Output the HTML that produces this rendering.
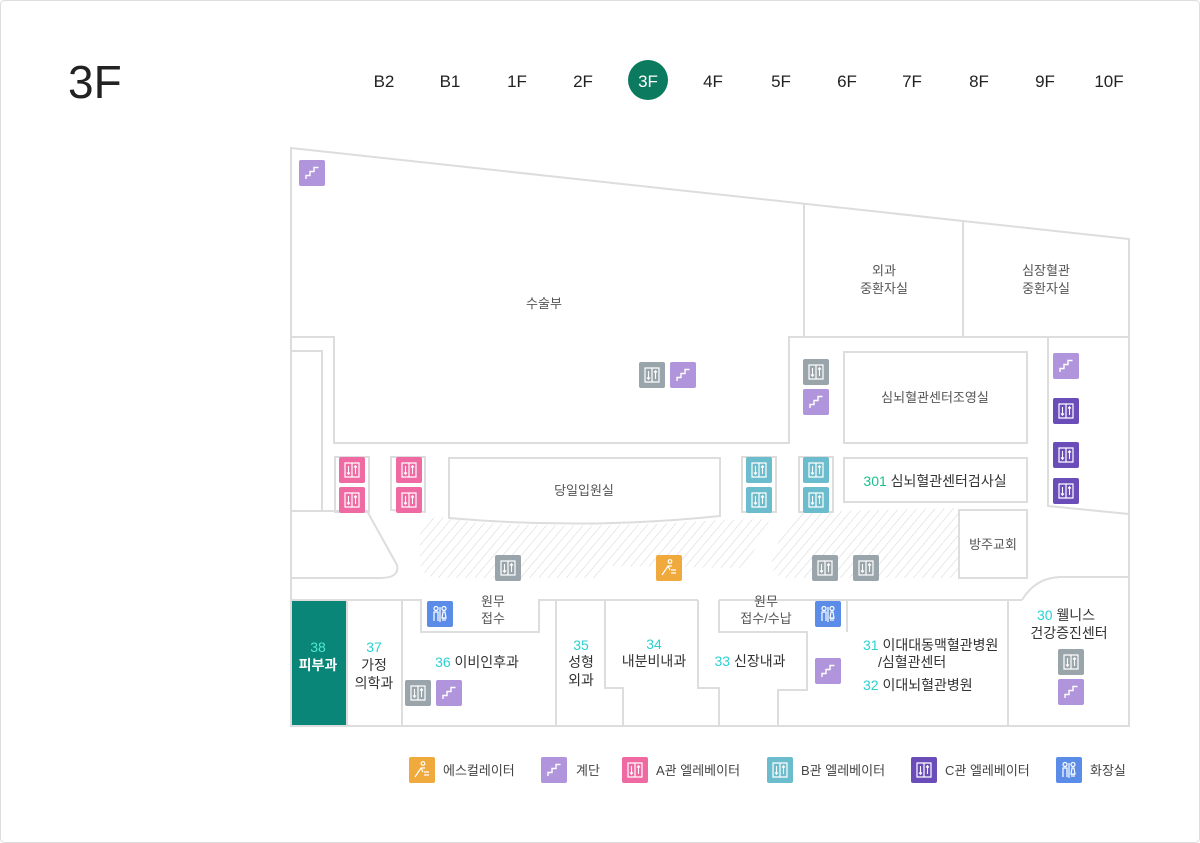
<!DOCTYPE html>
<html><head><meta charset="utf-8"><style>
html,body{margin:0;padding:0;background:#fff}
svg{display:block}
text{font-family:"Liberation Sans","Noto Sans CJK KR",sans-serif}
</style></head><body>
<svg width="1200" height="843" viewBox="0 0 1200 843" xmlns="http://www.w3.org/2000/svg">
<defs>
<pattern id="hatch" width="7" height="7" patternUnits="userSpaceOnUse" patternTransform="rotate(40)">
<line x1="0" y1="0" x2="0" y2="7" stroke="#d4d4d4" stroke-width="1"/>
</pattern>
<g id="elv"><path d="M6 6h14v14H6zM13 6v14" fill="none" stroke="#fff" stroke-width="1.2"/><path d="M9.5 9v8M8 15.5l1.5 1.8 1.5-1.8M16.5 17V9M15 10.5l1.5-1.8 1.5 1.8" fill="none" stroke="#fff" stroke-width="1.1"/></g>
<g id="stair"><path d="M7 19v-3.5h4v-4h4v-4h4.5" fill="none" stroke="#fff" stroke-width="1.4"/></g>
<g id="wc"><circle cx="9" cy="7.5" r="2" fill="none" stroke="#fff" stroke-width="1.2"/><path d="M7 20v-9h4v9M13 6v15" stroke="#fff" fill="none" stroke-width="1.2"/><circle cx="17" cy="7.5" r="2" fill="none" stroke="#fff" stroke-width="1.2"/><path d="M15 17l1-6h2l1 6zM16 17v3M18 17v3" stroke="#fff" fill="none" stroke-width="1.2"/></g>
<g id="esc"><circle cx="14" cy="6.5" r="1.8" fill="none" stroke="#fff" stroke-width="1.2"/><path d="M6 20l6-9h4M12 11l2 4M15 15h5M15 18h5" stroke="#fff" fill="none" stroke-width="1.2"/></g>
</defs>
<rect x="0.5" y="0.5" width="1199" height="842" rx="4" fill="#fff" stroke="#ddd"/>
<text x="68" y="98" font-size="46" fill="#222">3F</text>
<g font-size="17" fill="#222" text-anchor="middle">
<text x="384" y="87">B2</text><text x="450" y="87">B1</text><text x="517" y="87">1F</text><text x="583" y="87">2F</text>
<circle cx="648" cy="80" r="20" fill="#0b7a5e"/><text x="648" y="87" fill="#fff">3F</text>
<text x="713" y="87">4F</text><text x="781" y="87">5F</text><text x="847" y="87">6F</text><text x="912" y="87">7F</text><text x="979" y="87">8F</text><text x="1045" y="87">9F</text><text x="1109" y="87">10F</text>
</g>
<path d="M430 518 Q449 516 470 522 Q585 530 720 520 L770 519 L745 568 L610 566 L602 578 L440 578 Q420 578 420 560 L420 540 Q420 518 430 518Z" fill="url(#hatch)"/>
<path d="M800 512 L959 508 L959 578 L790 578 Q770 578 772 560 Q778 535 800 512Z" fill="url(#hatch)"/>
<rect x="291" y="600" width="56" height="126" fill="#0a8678"/>
<g fill="none" stroke="#ddd" stroke-width="2">
<path d="M291 148 L1129 239 L1129 726 L291 726 Z"/>
<path d="M804 204 V337 M963 222 V337 M789 337 H1129"/>
<path d="M291 337 H334 V443 H789 V337 H804"/>
<path d="M291 351 H322 V511"/>
<path d="M291 511 H367 L397 565 Q400 578 380 578 H291"/>
<path d="M335 457 H369 V512 H335Z M391 457 H425 V512 L391 510Z"/>
<path d="M449 458 H720 V516 Q585 530 449 518 Z"/>
<path d="M742 457 H776 V512 H742Z M799 457 H833 V512 H799Z"/>
<rect x="844" y="352" width="183" height="91"/>
<rect x="844" y="458" width="183" height="44"/>
<rect x="959" y="510" width="68" height="68"/>
<path d="M1048 337 V506 L1129 514"/>
<path d="M1022 600 Q1035 578 1060 577 H1129"/>
<path d="M291 600 H421 V632 H539 V600 H698 M719 600 H1022"/>
<path d="M698 600 V688 H719 V726 M719 600 V632 H807 V690 H778 V726 M847 600 V632"/>
<path d="M347 600 V726 M402 600 V726 M556 600 V726 M605 600 V688 H623 V726 M1008 600 V726"/>
</g>
<g>
<rect x="299" y="160" width="26" height="26" rx="2" fill="#b094dc"/><use href="#stair" x="299" y="160"/>
<rect x="639" y="362" width="26" height="26" rx="2" fill="#9aa5ab"/><use href="#elv" x="639" y="362"/>
<rect x="670" y="362" width="26" height="26" rx="2" fill="#b094dc"/><use href="#stair" x="670" y="362"/>
<rect x="803" y="359" width="26" height="26" rx="2" fill="#9aa5ab"/><use href="#elv" x="803" y="359"/>
<rect x="803" y="389" width="26" height="26" rx="2" fill="#b094dc"/><use href="#stair" x="803" y="389"/>
<rect x="1053" y="353" width="26" height="26" rx="2" fill="#b094dc"/><use href="#stair" x="1053" y="353"/>
<rect x="1053" y="398" width="26" height="26" rx="2" fill="#6a4db8"/><use href="#elv" x="1053" y="398"/>
<rect x="1053" y="442" width="26" height="26" rx="2" fill="#6a4db8"/><use href="#elv" x="1053" y="442"/>
<rect x="1053" y="478" width="26" height="26" rx="2" fill="#6a4db8"/><use href="#elv" x="1053" y="478"/>
<rect x="339" y="457" width="26" height="26" rx="2" fill="#ef69a2"/><use href="#elv" x="339" y="457"/>
<rect x="339" y="487" width="26" height="26" rx="2" fill="#ef69a2"/><use href="#elv" x="339" y="487"/>
<rect x="396" y="457" width="26" height="26" rx="2" fill="#ef69a2"/><use href="#elv" x="396" y="457"/>
<rect x="396" y="487" width="26" height="26" rx="2" fill="#ef69a2"/><use href="#elv" x="396" y="487"/>
<rect x="746" y="457" width="26" height="26" rx="2" fill="#6bbccc"/><use href="#elv" x="746" y="457"/>
<rect x="746" y="487" width="26" height="26" rx="2" fill="#6bbccc"/><use href="#elv" x="746" y="487"/>
<rect x="803" y="457" width="26" height="26" rx="2" fill="#6bbccc"/><use href="#elv" x="803" y="457"/>
<rect x="803" y="487" width="26" height="26" rx="2" fill="#6bbccc"/><use href="#elv" x="803" y="487"/>
<rect x="495" y="555" width="26" height="26" rx="2" fill="#9aa5ab"/><use href="#elv" x="495" y="555"/>
<rect x="656" y="555" width="26" height="26" rx="2" fill="#f0a93c"/><use href="#esc" x="656" y="555"/>
<rect x="812" y="555" width="26" height="26" rx="2" fill="#9aa5ab"/><use href="#elv" x="812" y="555"/>
<rect x="853" y="555" width="26" height="26" rx="2" fill="#9aa5ab"/><use href="#elv" x="853" y="555"/>
<rect x="427" y="601" width="26" height="26" rx="2" fill="#5b8de8"/><use href="#wc" x="427" y="601"/>
<rect x="815" y="601" width="26" height="26" rx="2" fill="#5b8de8"/><use href="#wc" x="815" y="601"/>
<rect x="405" y="680" width="26" height="26" rx="2" fill="#9aa5ab"/><use href="#elv" x="405" y="680"/>
<rect x="436" y="680" width="26" height="26" rx="2" fill="#b094dc"/><use href="#stair" x="436" y="680"/>
<rect x="815" y="658" width="26" height="26" rx="2" fill="#b094dc"/><use href="#stair" x="815" y="658"/>
<rect x="1058" y="649" width="26" height="26" rx="2" fill="#9aa5ab"/><use href="#elv" x="1058" y="649"/>
<rect x="1058" y="679" width="26" height="26" rx="2" fill="#b094dc"/><use href="#stair" x="1058" y="679"/>
</g>
<g font-size="13" fill="#555" text-anchor="middle">
<text x="544" y="308">수술부</text>
<text x="884" y="275">외과</text><text x="884" y="293">중환자실</text>
<text x="1046" y="275">심장혈관</text><text x="1046" y="293">중환자실</text>
<text x="935" y="402">심뇌혈관센터조영실</text>
<text x="584" y="495">당일입원실</text>
<text x="993" y="549">방주교회</text>
<text x="493" y="606">원무</text><text x="493" y="623">접수</text>
<text x="766" y="606">원무</text><text x="766" y="623">접수/수납</text>
</g>
<g font-size="14" fill="#333" text-anchor="middle">
<text x="935" y="486"><tspan fill="#19c08c">301</tspan> 심뇌혈관센터검사실</text>
<text x="318" y="652" fill="#4ee6d4">38</text><text x="318" y="670" fill="#fff" font-weight="bold">피부과</text>
<text x="374" y="652" fill="#2ad1d1">37</text><text x="374" y="670">가정</text><text x="374" y="688">의학과</text>
<text x="477" y="667"><tspan fill="#2ad1d1">36</tspan> 이비인후과</text>
<text x="581" y="650" fill="#2ad1d1">35</text><text x="581" y="667">성형</text><text x="581" y="685">외과</text>
<text x="654" y="649" fill="#2ad1d1">34</text><text x="654" y="666">내분비내과</text>
<text x="750" y="666"><tspan fill="#2ad1d1">33</tspan> 신장내과</text>
<text x="1066" y="620"><tspan fill="#2ad1d1">30</tspan> 웰니스</text><text x="1069" y="638">건강증진센터</text>
</g>
<g font-size="14" fill="#333">
<text x="863" y="650"><tspan fill="#2ad1d1">31</tspan> 이대대동맥혈관병원</text>
<text x="878" y="667">/심혈관센터</text>
<text x="863" y="690"><tspan fill="#2ad1d1">32</tspan> 이대뇌혈관병원</text>
</g>
<g font-size="13" fill="#444">
<rect x="409" y="757" width="26" height="26" rx="2" fill="#f0a93c"/><use href="#esc" x="409" y="757"/><text x="443" y="775">에스컬레이터</text>
<rect x="541" y="757" width="26" height="26" rx="2" fill="#b094dc"/><use href="#stair" x="541" y="757"/><text x="576" y="775">계단</text>
<rect x="622" y="757" width="26" height="26" rx="2" fill="#ef69a2"/><use href="#elv" x="622" y="757"/><text x="656" y="775">A관 엘레베이터</text>
<rect x="767" y="757" width="26" height="26" rx="2" fill="#6bbccc"/><use href="#elv" x="767" y="757"/><text x="801" y="775">B관 엘레베이터</text>
<rect x="911" y="757" width="26" height="26" rx="2" fill="#6a4db8"/><use href="#elv" x="911" y="757"/><text x="945" y="775">C관 엘레베이터</text>
<rect x="1056" y="757" width="26" height="26" rx="2" fill="#5b8de8"/><use href="#wc" x="1056" y="757"/><text x="1090" y="775">화장실</text>
</g>
</svg>
</body></html>
